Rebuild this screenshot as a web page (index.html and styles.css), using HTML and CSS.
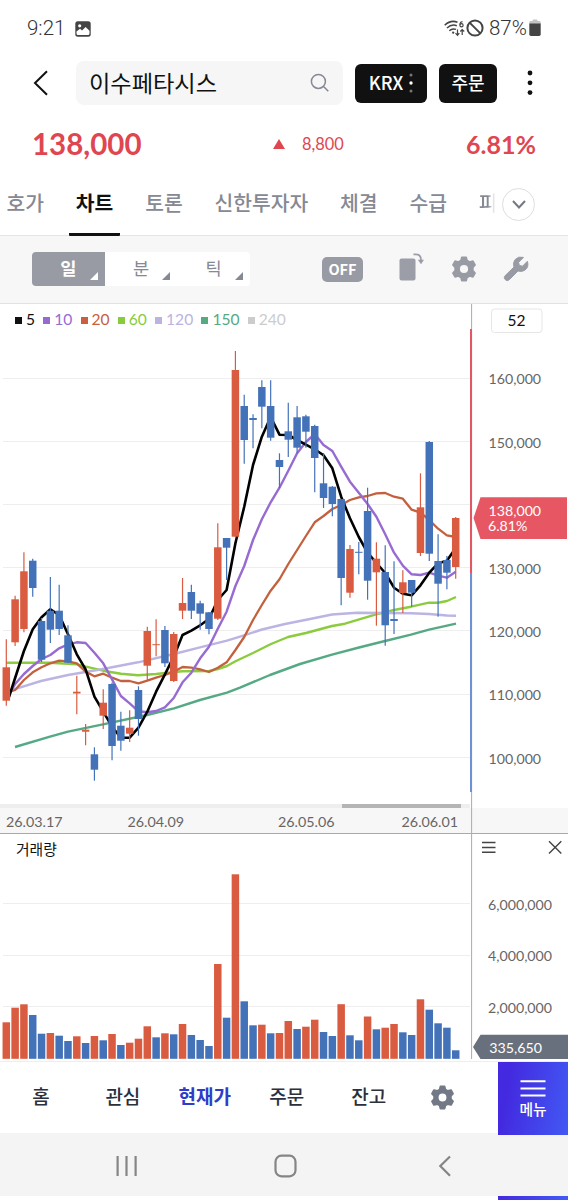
FILE: index.html
```html
<!DOCTYPE html>
<html lang="ko">
<head>
  <meta charset="UTF-8">
  <meta name="viewport" content="width=device-width, initial-scale=1.0">
  <title>이수페타시스</title>
  <link rel="stylesheet" href="styles.css">
</head>
<body>
  <!-- Phone status bar -->
  <div class="status-bar">
    <span class="clock">9:21</span>
    <svg class="photo-icon" width="16" height="16" viewBox="0 0 16 16">
      <rect x="0.3" y="0.3" width="15.4" height="15.4" rx="2.5" fill="#444"/>
      <circle cx="4.7" cy="4.8" r="1.6" fill="#fff"/>
      <path d="M1.5 12.5V10.5L5 7.7L7 9.6L10.6 6L14.5 9.8V12.5Q14.5 14 13 14H3Q1.5 14 1.5 12.5Z" fill="#fff"/>
    </svg>
    <div class="status-right">
      <svg width="21" height="17" viewBox="0 0 21 17" fill="none" stroke="#444" stroke-width="1.5">
        <path d="M.7 5.2Q6.5 -.4 13.5 2.2M3 8Q7.5 3.8 12.8 5.7M5.3 10.7Q8.3 8 12 9.4"/>
        <path d="M8.3 12.2L10 13.2" stroke-width="2"/>
        <path d="M18.5 1.9Q16.1 1.3 15.9 4.8" stroke-width="1.2"/>
        <circle cx="17.5" cy="5.2" r="1.6" stroke-width="1.2"/>
        <path d="M13.5 9.5V15.3M11.5 13.2L13.5 15.3L15.3 13.2M18.2 15V9.5M16.3 11.5L18.2 9.5L20.2 11.5" stroke-width="1.2"/>
      </svg>
      <svg width="18" height="18" viewBox="0 0 18 18" fill="none" stroke="#444" stroke-width="2">
        <circle cx="9" cy="9" r="7.6"/><path d="M3.6 3.6L14.4 14.4"/>
      </svg>
      <span class="battery-text">87%</span>
      <svg width="12" height="18" viewBox="0 0 12 18">
        <path d="M3.5 1.5Q3.5 .5 4.5 .5H7.5Q8.5 .5 8.5 1.5V2H10.5Q11.7 2 11.7 3.5V5H.3V3.5Q.3 2 1.5 2H3.5Z" fill="#c4c4c4"/>
        <path d="M.3 4.5H11.7V15.3Q11.7 17 10 17H2Q.3 17 .3 15.3Z" fill="#444"/>
      </svg>
    </div>
  </div>

  <!-- Stock name, search and order buttons -->
  <div class="header">
    <svg class="back" width="16" height="26" viewBox="0 0 16 26" fill="none" stroke="#111" stroke-width="2">
      <path d="M14 1.2L2 13L14 24.8"/>
    </svg>
    <div class="search">
      <span>이수페타시스</span>
      <svg width="20" height="20" viewBox="0 0 20 20" fill="none" stroke="#858993" stroke-width="1.5">
        <circle cx="8.4" cy="8.4" r="7"/><path d="M13.5 13.5L18.3 18.3"/>
      </svg>
    </div>
    <div class="black-button krx"><span>KRX</span>
      <svg width="4" height="20" viewBox="0 0 4 20">
        <circle cx="2" cy="2" r="1.5" fill="#777"/><circle cx="2" cy="10" r="1.7" fill="#fff"/><circle cx="2" cy="18" r="1.5" fill="#777"/>
      </svg>
    </div>
    <div class="black-button order"><span>주문</span></div>
    <svg class="more" width="6" height="26" viewBox="0 0 6 26" fill="#111">
      <circle cx="3" cy="3" r="2.4"/><circle cx="3" cy="12.8" r="2.4"/><circle cx="3" cy="22.6" r="2.4"/>
    </svg>
  </div>

  <div class="price-row">
    <span class="price">138,000</span>
    <span class="change"><i class="up"></i>8,800</span>
    <span class="rate">6.81%</span>
  </div>

  <div class="tabs">
    <span class="tab">호가</span>
    <span class="tab active">차트</span>
    <span class="tab">토론</span>
    <span class="tab">신한투자자</span>
    <span class="tab">체결</span>
    <span class="tab">수급</span>
    <span class="tab cut">피</span>
    <span class="expand">
      <svg width="14" height="9" viewBox="0 0 14 9" fill="none" stroke="#747982" stroke-width="2">
        <path d="M1 1L7 7.5L13 1"/>
      </svg>
    </span>
  </div>

  <!-- Chart toolbar -->
  <div class="toolbar">
    <div class="period">
      <span class="period-item selected">일</span>
      <span class="period-item">분</span>
      <span class="period-item">틱</span>
    </div>
    <span class="off">OFF</span>
    <svg class="rotate" width="26" height="28" viewBox="0 0 26 28">
      <rect x="0.5" y="5.5" width="16" height="22" rx="2" fill="#9b9da7"/>
      <path d="M14.5 1.4H17Q22 1.4 22 7" fill="none" stroke="#9b9da7" stroke-width="1.7"/>
      <path d="M18.8 6.8H25L22 11.2Z" fill="#9b9da7"/>
    </svg>
    <svg class="gear" width="24" height="26" viewBox="0 0 24 26"><use href="#gear-shape"/></svg>
    <svg class="wrench" width="26" height="26" viewBox="0 0 26 26">
      <path d="M20.5 1.4L15.6 6.3L16.3 9.4L19.5 10.2L24.4 5.3Q26.2 11.2 21.8 14.2Q18.7 16.2 15 15L6.2 23.8Q4.3 25.5 2.3 23.7Q.3 21.6 2.2 19.6L11 11Q9.6 7 12 3.7Q15.3 -.2 20.5 1.4Z" fill="#999ba4" stroke="#999ba4" stroke-linejoin="round"/>
    </svg>
  </div>

  <!-- Candle chart -->
  <div class="chart">
    <div class="plot">
      <div class="legend">
        <span class="ma5">5</span>
        <span class="ma10">10</span>
        <span class="ma20">20</span>
        <span class="ma60">60</span>
        <span class="ma120">120</span>
        <span class="ma150">150</span>
        <span class="ma240">240</span>
      </div>
      <svg id="candles" width="470" height="466" viewBox="0 338 470 466"></svg>
      <div class="scroll-track"><div class="scroll-thumb"></div></div>
      <div class="dates">
        <span>26.03.17</span>
        <span>26.04.09</span>
        <span>26.05.06</span>
        <span>26.06.01</span>
      </div>
    </div>
    <svg id="price-axis" class="axis" width="98" height="529" viewBox="470 304 98 529">
      <rect x="472" y="808" width="96" height="25" fill="#f7f7f7"/>
      <path d="M471.6 304V833" stroke="#aaa"/>
      <path d="M471 329V573" stroke="#e25763" stroke-width="2"/>
      <path d="M471 573V792" stroke="#6e90d4" stroke-width="2"/>
      <rect x="491.5" y="309" width="50.5" height="23.5" rx="3" fill="#fff" stroke="#e6e6e6"/>
      <text class="count" x="516.5" y="326">52</text>
      <path d="M473.5 518L480.5 497.3H567V539H480.5Z" fill="#e65763"/>
      <text class="tag-text" x="488.5" y="515.5">138,000</text>
      <text class="tag-text" x="488" y="531.3">6.81%</text>
    </svg>
  </div>

  <!-- Volume chart -->
  <div class="volume">
    <div class="plot">
      <div class="volume-title">거래량</div>
      <svg id="bars" width="470" height="198" viewBox="0 863 470 198"></svg>
    </div>
    <svg id="volume-axis" class="axis" width="98" height="227" viewBox="470 834 98 227">
      <path d="M471.6 834V1059" stroke="#aaa"/>
      <path d="M482 842.5H495.5M482 847.5H495.5M482 852.3H495.5M549 841.3L561.3 853.5M561.3 841.3L549 853.5" stroke="#444" stroke-width="1.4"/>
      <path d="M473 1047L480.5 1034.8H568V1059H480.5Z" fill="#68707d"/>
      <text class="tag-text" x="489.3" y="1052.8">335,650</text>
    </svg>
  </div>

  <!-- App menu -->
  <div class="menu">
    <span class="menu-item">홈</span>
    <span class="menu-item">관심</span>
    <span class="menu-item current">현재가</span>
    <span class="menu-item">주문</span>
    <span class="menu-item">잔고</span>
    <span class="menu-item">
      <svg class="menu-gear" width="23" height="25" viewBox="0 0 24 26"><use href="#gear-shape"/></svg>
    </span>
    <div class="menu-button">
      <svg width="26" height="18" viewBox="0 0 26 18" stroke="#fff" stroke-width="2">
        <path d="M.5 1.3H25.5M.5 8.5H25.5M.5 15.5H25.5"/>
      </svg>
      <span>메뉴</span>
    </div>
  </div>

  <div class="system-nav">
    <svg width="568" height="63" viewBox="0 0 568 63" fill="none" stroke="#858585" stroke-width="2.2">
      <path d="M117.6 23V43M126.5 23V43M135.6 23V43"/>
      <rect x="275.5" y="22.7" width="20" height="20.6" rx="6"/>
      <path d="M450 23.5L440.3 33L450 42.7"/>
    </svg>
  </div>
  <div class="bottom-edge"><div></div></div>

  <!-- Gear used in the toolbar and the menu -->
  <svg class="defs" width="0" height="0">
    <defs>
      <path id="gear-shape" fill-rule="evenodd" stroke-linejoin="round" stroke-width="1.8" d="M9.8 1.5H14.2L15 4.6L17.6 6.1L20.9 5.2L23 9L20.8 11.4V14.6L23 17L20.9 20.8L17.6 19.9L15 21.4L14.2 24.5H9.8L9 21.4L6.4 19.9L3.1 20.8L1 17L3.2 14.6V11.4L1 9L3.1 5.2L6.4 6.1L9 4.6ZM12 8A5 5 0 1 0 12 18A5 5 0 1 0 12 8Z"/>
    </defs>
  </svg>

  <script src="chart.js"></script>
</body>
</html>
```
FILE: styles.css
```css
* {
  box-sizing: border-box;
}

body {
  margin: 0;
  width: 568px;
  height: 1200px;
  overflow: hidden;
  background: #fff;
  color: #111;
  font-family: Lato, "Noto Sans CJK KR", sans-serif;
}

svg {
  display: block;
  flex: none;
}

/* Phone status bar */
.status-bar {
  height: 56px;
  display: flex;
  align-items: center;
  padding: 0 27px;
  font-family: Roboto, sans-serif;
  font-size: 20.5px;
  font-weight: 300;
  color: #333;
}

.clock {
  width: 38px;
  white-space: nowrap;
}

.photo-icon {
  margin: 1px 0 0 10px;
}

.status-right {
  display: flex;
  align-items: center;
  margin-left: auto;
}

.status-right svg:first-child {
  margin-right: 1px;
}

.battery-text {
  width: 38px;
  margin: 0 2px 0 5px;
}

/* Header */
.header {
  height: 56px;
  display: flex;
  align-items: center;
  padding: 0 0 2px 33px;
}

.search {
  display: flex;
  align-items: center;
  justify-content: space-between;
  width: 267px;
  height: 44px;
  margin-left: 27px;
  padding: 0 13px;
  border-radius: 8px;
  background: #f6f6f6;
  font-family: "Noto Sans CJK KR", sans-serif;
  font-size: 23.2px;
  font-weight: 400;
}

.search span,
.black-button span {
  margin-top: -3px;
}

.black-button {
  display: flex;
  align-items: center;
  justify-content: center;
  height: 39px;
  border-radius: 6px;
  background: #111;
  color: #fff;
  font-family: "Noto Sans CJK KR", sans-serif;
  font-size: 18px;
  font-weight: 500;
}

.krx {
  width: 72px;
  margin-left: 12px;
  gap: 6px;
}

.order {
  width: 58px;
  margin-left: 12px;
}

.more {
  margin-left: 30px;
}

/* Price */
.price-row {
  height: 66px;
  display: flex;
  align-items: center;
  padding: 0 32px 3px;
  color: #df4650;
}

.price {
  width: 241px;
  font-size: 29.5px;
  font-weight: 700;
}

.change {
  display: flex;
  align-items: center;
  gap: 17px;
  font-size: 16.4px;
}

.up {
  border: 6px solid transparent;
  border-top: 0;
  border-bottom: 10px solid #df4650;
}

.rate {
  margin-left: auto;
  text-align: right;
  font-size: 25px;
  font-weight: 700;
}

/* Tabs */
.tabs {
  height: 57px;
  display: flex;
  align-items: flex-start;
  gap: 31.8px;
  padding: 8px 0 0 6.5px;
  font-family: "Noto Sans CJK KR", sans-serif;
  font-size: 20.4px;
  font-weight: 500;
  line-height: 32px;
  color: #858993;
  white-space: nowrap;
}

.tab {
  flex: none;
}

.active {
  height: 50px;
  margin: 0 -7px;
  padding: 0 7px;
  border-bottom: 3px solid #111;
  border-radius: 1px;
  color: #111;
  font-weight: 700;
}

/* last visible tab fades out under the expand button */
.cut {
  background: linear-gradient(90deg, #858993 45%, #eee 80%, transparent 85%);
  background-clip: text;
  -webkit-background-clip: text;
  color: transparent;
}

.expand {
  display: flex;
  align-items: center;
  justify-content: center;
  flex: none;
  width: 33px;
  height: 33px;
  margin: 2px 0 0 -27px;
  border: 1.5px solid #dedede;
  border-radius: 50%;
}

/* Chart toolbar */
.toolbar {
  height: 69px;
  display: flex;
  align-items: center;
  padding-left: 32px;
  border-top: 1px solid #e5e5e5;
  border-bottom: 1px solid #e2e2e2;
  background: #f7f7f7;
}

.period {
  display: flex;
  width: 218px;
  height: 34px;
  margin-top: -1px;
  overflow: hidden;
  border-radius: 4px;
  background: #fff;
  font-family: "Noto Sans CJK KR", sans-serif;
  font-size: 17.6px;
  line-height: 31px;
  color: #858993;
}

.period-item {
  position: relative;
  width: 72.7px;
  text-align: center;
}

.period-item::after {
  content: "";
  position: absolute;
  right: 7px;
  bottom: 6px;
  border-left: 8px solid transparent;
  border-bottom: 8px solid #858993;
}

.selected {
  background: #999ba4;
  color: #fff;
  font-weight: 700;
}

.selected::after {
  border-bottom-color: #fff;
}

.off {
  width: 41px;
  height: 25px;
  margin-left: 72px;
  border-radius: 5px;
  background: #999ba4;
  color: #fff;
  font-family: "Noto Sans CJK KR", sans-serif;
  font-size: 14.5px;
  font-weight: 700;
  line-height: 24px;
  text-align: center;
}

.rotate {
  margin: -5px 0 0 36px;
}

.gear {
  margin: -1px 0 0 27px;
  fill: #999ba4;
  stroke: #999ba4;
}

.wrench {
  margin: -2px 0 0 27px;
}

/* Candle chart */
.chart {
  display: flex;
  height: 530px;
  border-bottom: 1px solid #aaa;
}

.plot {
  width: 470px;
}

.legend {
  display: flex;
  gap: 8.2px;
  height: 34px;
  padding-left: 15px;
  font-size: 15.6px;
  line-height: 31px;
}

.legend span {
  display: flex;
  align-items: center;
  gap: 4px;
  height: 31px;
}

.legend span::before {
  content: "";
  width: 7px;
  height: 7px;
  margin-top: 2px;
  background: currentColor;
}

.ma5 { color: #111; }
.ma10 { color: #966bd0; }
.ma20 { color: #c8603f; }
.ma60 { color: #87cc3c; }
.ma120 { color: #bbb3e0; }
.ma150 { color: #55aa80; }
.ma240 { color: #ccc; }

.scroll-track {
  height: 4px;
  padding-right: 9px;
  background: #eee;
}

.scroll-thumb {
  width: 119.5px;
  height: 4px;
  margin-left: auto;
  background: #b5b5b5;
}

.dates {
  display: flex;
  width: 472px;
  height: 25px;
  padding-left: 6px;
  background: #f7f7f7;
  font-size: 14.3px;
  line-height: 27px;
  color: #666;
}

.dates span:nth-child(2) {
  margin-left: 65px;
}

.dates span:nth-child(3) {
  margin-left: 94px;
}

.dates span:nth-child(4) {
  margin-left: 67px;
}

.axis text {
  font-size: 14.2px;
  fill: #666;
}

.axis .count {
  fill: #111;
  font-size: 15.5px;
  text-anchor: middle;
}

.axis .tag-text {
  fill: #fff;
}

/* Volume chart */
.volume {
  display: flex;
  height: 228px;
  border-bottom: 1px solid #eee;
}

.volume-title {
  height: 29px;
  padding-left: 16px;
  font-family: "Noto Sans CJK KR", sans-serif;
  font-size: 14.8px;
  line-height: 30px;
}

/* App menu */
.menu {
  display: flex;
  height: 71px;
  font-family: "Noto Sans CJK KR", sans-serif;
  font-size: 19px;
  font-weight: 500;
  color: #2b303c;
}

.menu-item {
  display: flex;
  align-items: center;
  justify-content: center;
  width: 82px;
  padding-bottom: 4px;
}

.current {
  color: #303cc9;
  font-weight: 700;
}

.menu-gear {
  margin: 4px 0 0 -17px;
  fill: #737986;
  stroke: #737986;
}

.menu-button {
  display: flex;
  flex-direction: column;
  align-items: center;
  flex: none;
  width: 70px;
  height: 73px;
  margin-left: 6.5px;
  padding-top: 18px;
  background: linear-gradient(100deg, #4329df 15%, #4259f4);
  color: #fff;
  font-size: 14.8px;
  line-height: 22px;
}

/* Phone buttons */
.system-nav {
  height: 63px;
  background: #f4f4f4;
}

.bottom-edge {
  height: 4px;
}

.bottom-edge div {
  width: 70px;
  height: 4px;
  margin-left: auto;
  background: linear-gradient(90deg, #4329df, #4259f4);
}

.menu-button,
.system-nav {
  position: relative;
}

.menu-button {
  z-index: 1;
}

.defs {
  position: absolute;
}
```
FILE: chart.js
```js
const RED = "#d95b40";
const BLUE = "#4472b9";
const STEP = 8.812;
const FIRST = 6.3;

// direction, high, body top, body bottom, low, volume top, volume colour if it differs
const days = [
  ["r", 639.3, 667.3, 700.7, 705.7, 1022.3], ["r", 595.7, 599.3, 642.3, 646, 1007.7],
  ["r", 552.3, 571.3, 629, 632.3, 1004.3], ["b", 558.7, 560.7, 588, 596.7, 1015],
  ["b", 618, 621, 659.7, 662, 1033.7], ["b", 577, 610.7, 629.7, 643, 1033, "r"],
  ["b", 584.7, 610.7, 629, 635, 1035.7], ["b", 625.3, 635.3, 662.7, 663, 1041],
  ["r", 675.7, 691.7, 693.5, 714.3, 1036.3], ["r", 724, 729.7, 731.7, 745.3, 1043, "b"],
  ["b", 747.3, 754.3, 769.7, 780.7, 1036, "r"], ["r", 689.3, 702.7, 715.7, 729, 1040.3, "b"],
  ["b", 682.5, 684, 746, 760.3, 1034, "r"], ["b", 711.7, 725.7, 740.7, 750.7, 1045],
  ["r", 710.3, 727.7, 733.7, 742, 1042.7], ["b", 686.3, 690, 719, 735.7, 1038.7, "r"],
  ["r", 626.7, 631, 665.7, 680, 1026.3], ["r", 619.3, 644.2, 645.2, 656.3, 1037.3, "b"],
  ["b", 626, 630, 663.3, 667, 1033.3, "r"], ["r", 632, 634, 681, 682, 1034.3, "b"],
  ["r", 578, 603, 610.7, 619, 1024], ["b", 584.7, 592, 610.7, 619, 1035],
  ["b", 600.7, 603.3, 613.7, 629.7, 1040], ["b", 612, 612.3, 629, 634.3, 1046],
  ["r", 523.3, 547.3, 618.7, 620, 964], ["b", 538, 538, 547.7, 580, 1017.7],
  ["r", 351, 370, 536.7, 537, 874.3], ["b", 394.7, 406, 440, 463.7, 1001.3],
  ["b", 414.3, 418, 420, 448.3, 1025.3], ["b", 380.3, 387, 406.7, 428.3, 1024.7, "r"],
  ["b", 380.3, 406, 437.7, 440.7, 1033.3], ["b", 453.3, 460, 467, 488, 1033, "r"],
  ["b", 402.7, 431.3, 439.7, 457, 1021, "r"], ["b", 406, 417.3, 447.7, 453.3, 1029],
  ["b", 414.7, 416.3, 431.7, 447.7, 1026.7, "r"], ["b", 424.7, 426, 458, 492.3, 1019.7, "r"],
  ["b", 453, 483.3, 498, 508, 1032], ["b", 486, 486.7, 504, 516.3, 1036],
  ["b", 499, 499, 578, 605.3, 1004.2, "r"], ["r", 545, 549, 592.7, 597.7, 1035.3, "b"],
  ["b", 542, 551.8, 552.8, 574.3, 1040.3], ["b", 487.7, 511, 580.7, 599.7, 1016.5, "r"],
  ["r", 542.3, 558.7, 572.3, 625.7, 1029.3, "b"], ["b", 545.3, 572, 625.3, 645.7, 1027.7, "r"],
  ["b", 561.3, 619, 621, 634, 1024, "r"], ["r", 570.3, 582.3, 593, 613, 1032.3, "b"],
  ["b", 580, 580, 592.7, 606.7, 1035], ["r", 473.3, 507.3, 553, 556, 999.3],
  ["b", 441, 442, 553.7, 561, 1009.7], ["b", 534.3, 561, 583.7, 616.7, 1023.3],
  ["b", 556, 560, 572.7, 589.3, 1027.7], ["r", 517, 518, 567, 578.7, 1050.3, "b"]
];

// moving averages, slowest first so the fast ones lie on top
const averages = [
  ["#55a985", 2.4, "15,747 50,736.7 68,731.7 103,724.3 147,715 174,708.3 200,700 227,692.7 240,687.7 270,675 300,664 332,654.7 359,647.5 385,641 411,634.7 429,629.7 456,623.7"],
  ["#8bcb3e", 2.4, "6,662.7 50,662.7 77,664.3 86,666.7 103,670.7 121,673.7 138,675.3 156,674 182,671.3 209,671 218,669 227,666 235,661.5 253,653 271,644 288,637 306,633 332,626 345,623.7 376,614.3 394,610 411,606.7 429,602.7 438,602.7 447,601 456,597"],
  ["#bcb4e2", 2.4, "10,690.7 41,681 68,675 103,669 138,662.3 174,654 200,647.3 227,640.7 240,636.7 262,629.5 285,624 310,619 332,614.5 357,612.7 385,613 411,613.3 429,614 447,615.5 456,615.7"]
];
const daily = [
  ["#c3613f", 2.3, [692, 690, 680, 672.3, 667.3, 663.3, 660.7, 661.3, 663.3, 671.7, 676.3, 673.7, 677.7, 681, 681, 683.3, 680.7, 677.7, 675, 671.7, 667, 667.7, 669.3, 672, 667.7, 662.3, 650, 637, 620, 605, 590.7, 579.3, 564, 550, 536, 522.3, 516, 509, 505, 500, 497.3, 496, 493.3, 493, 496.7, 498.7, 509.7, 512.7, 520, 528.7, 535.3, 537]],
  ["#976bd1", 2.4, [694, 684, 674, 666, 659, 655, 648.3, 644.3, 642.3, 643, 652.7, 663.3, 679.3, 696, 703.3, 711.3, 712.3, 711, 707.3, 698, 682.3, 672.7, 658.3, 646.7, 628.7, 611.7, 586, 566, 540, 519.3, 502.3, 487.7, 470.7, 453.3, 442, 434, 445, 451, 466.7, 481.7, 492.7, 504, 516.7, 534.3, 552.7, 565.7, 574.3, 575, 572.7, 575.7, 577.7, 571.7]],
  ["#000", 2.6, [697, 678, 651, 629.3, 617.3, 609.3, 615, 634.3, 654.3, 669.3, 696.7, 711.7, 726.7, 737.7, 737.7, 727.7, 711.7, 691.7, 674.3, 656.7, 635, 630.7, 625.3, 619, 600, 590, 543.3, 506.7, 465, 436.7, 417, 434.7, 435, 440, 444.7, 449.3, 455.3, 468.3, 496.7, 518.3, 537, 552.7, 563, 573, 587.7, 593.7, 595.3, 585.3, 572.7, 563.3, 560.7, 548]]
];

const x = i => FIRST + STEP * i;
const gridLine = y => `<path d="M3 ${y}H470" stroke="#eee"/>`;
const line = (color, width, points) =>
  `<polyline points="${points}" fill="none" stroke="${color}" stroke-width="${width}" stroke-linejoin="round"/>`;

// Candle chart
let candles = "";
let priceLabels = "";
for (let i = 0; i < 7; i++) {
  const y = 378.5 + i * 63.2;
  candles += gridLine(Math.round(y) - 0.5);
  // the price tag covers the 140,000 label
  if (i !== 2) {
    priceLabels += `<text x="488.5" y="${y + 5.8}">${160 - i * 10},000</text>`;
  }
}
averages.forEach(([color, width, points]) => candles += line(color, width, points));
daily.forEach(([color, width, ys]) => {
  const points = ys.map((y, i) => `${i === 0 ? 9 : x(i)},${y}`).join(" ");
  candles += line(color, width, points);
});
days.forEach(([dir, high, top, bottom, low], i) => {
  const color = dir === "r" ? RED : BLUE;
  candles += `<path d="M${x(i)} ${high}V${low}" stroke="${color}" stroke-width="1.2"/>`;
  candles += `<rect x="${x(i) - 3.75}" y="${top}" width="7.5" height="${bottom - top}" fill="${color}"/>`;
});
document.getElementById("candles").innerHTML = candles;
document.getElementById("price-axis").innerHTML += priceLabels;

// Volume chart
let bars = "";
let volumeLabels = "";
[6, 4, 2].forEach((n, i) => {
  bars += gridLine([903.5, 955.5, 1006.5][i]);
  volumeLabels += `<text x="488" y="${909.8 + i * 51.6}">${n},000,000</text>`;
});
days.forEach((day, i) => {
  const color = (day[6] || day[0]) === "r" ? RED : BLUE;
  bars += `<rect x="${x(i) - 3.75}" y="${day[5]}" width="7.5" height="${1058.8 - day[5]}" fill="${color}"/>`;
});
document.getElementById("bars").innerHTML = bars;
document.getElementById("volume-axis").innerHTML += volumeLabels;
```
